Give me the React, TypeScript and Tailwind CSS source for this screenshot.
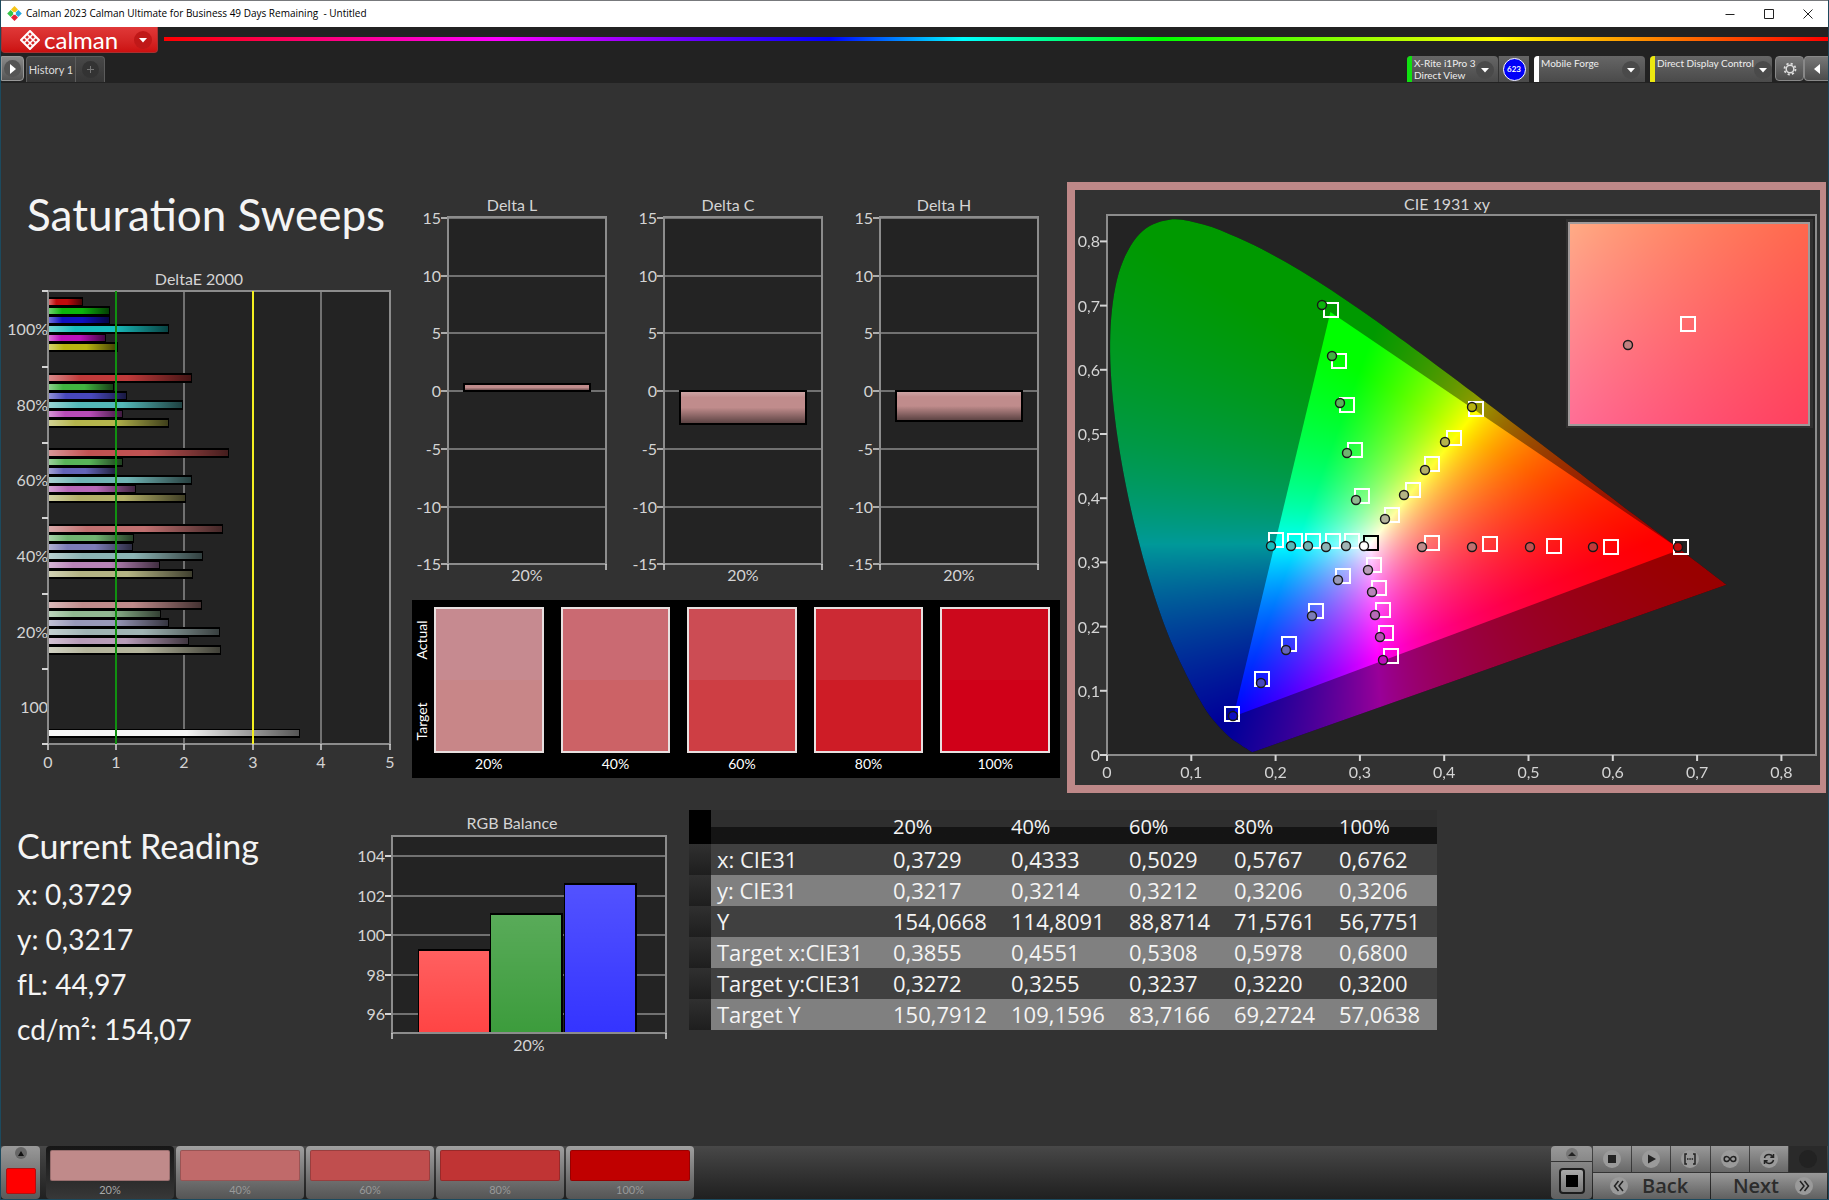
import React, { useEffect, useRef } from "react";

type Point = [number, number];

const LEVELS = ["20%", "40%", "60%", "80%", "100%"];

const DELTA_E_GROUPS = [
  {
    label: "100%",
    y: 302,
    bars: [
      ["#c00c0c", 83],
      ["#0cb40c", 110],
      ["#1010c0", 110],
      ["#18bcbc", 169],
      ["#bc10bc", 106],
      ["#b8b410", 118],
    ],
  },
  {
    label: "80%",
    y: 378,
    bars: [
      ["#c03a3a", 192],
      ["#40b440", 114],
      ["#4848bc", 127],
      ["#54b8b8", 183],
      ["#b84cb8", 123],
      ["#b4b44c", 169],
    ],
  },
  {
    label: "60%",
    y: 453,
    bars: [
      ["#c05252", 229],
      ["#58b458", 123],
      ["#6464b8", 116],
      ["#70b4b4", 192],
      ["#b868b8", 136],
      ["#b4b068", 186],
    ],
  },
  {
    label: "40%",
    y: 529,
    bars: [
      ["#c07070", 223],
      ["#70b470", 134],
      ["#7c7cb8", 133],
      ["#8cb4b4", 203],
      ["#b884b8", 160],
      ["#b4b484", 193],
    ],
  },
  {
    label: "20%",
    y: 605,
    bars: [
      ["#c08c8c", 202],
      ["#90b890", 161],
      ["#9898b8", 169],
      ["#a0b4b4", 220],
      ["#b89cb8", 189],
      ["#b4b49c", 221],
    ],
  },
] as { label: string; y: number; bars: [string, number][] }[];

const DELTA_CHARTS = [
  { title: "Delta L", x: 448, top: 384, bottom: 391 },
  { title: "Delta C", x: 664, top: 391, bottom: 424 },
  { title: "Delta H", x: 880, top: 391, bottom: 421 },
];

const SWATCHES = [
  { label: "20%", actual: "bg-[#c68a90]", target: "bg-[#c88688]" },
  { label: "40%", actual: "bg-[#ca6a72]", target: "bg-[#cc6266]" },
  { label: "60%", actual: "bg-[#cc4c54]", target: "bg-[#ce3e44]" },
  { label: "80%", actual: "bg-[#cc2a34]", target: "bg-[#ce1c26]" },
  { label: "100%", actual: "bg-[#cc081c]", target: "bg-[#d00018]" },
];

const TABLE_ROWS = [
  ["x: CIE31", "0,3729", "0,4333", "0,5029", "0,5767", "0,6762"],
  ["y: CIE31", "0,3217", "0,3214", "0,3212", "0,3206", "0,3206"],
  ["Y", "154,0668", "114,8091", "88,8714", "71,5761", "56,7751"],
  ["Target x:CIE31", "0,3855", "0,4551", "0,5308", "0,5978", "0,6800"],
  ["Target y:CIE31", "0,3272", "0,3255", "0,3237", "0,3220", "0,3200"],
  ["Target Y", "150,7912", "109,1596", "83,7166", "69,2724", "57,0638"],
];

const PATTERNS = [
  { label: "20%", color: "bg-[#c08a8a]" },
  { label: "40%", color: "bg-[#c06a6a]" },
  { label: "60%", color: "bg-[#c04e4e]" },
  { label: "80%", color: "bg-[#c03434]" },
  { label: "100%", color: "bg-[#c00000]" },
];

// spectral locus, 380nm to 700nm
const LOCUS: Point[] = [
  [0.1741, 0.005], [0.1714, 0.0051], [0.1644, 0.0109], [0.1566, 0.0177], [0.144, 0.0297],
  [0.1241, 0.0578], [0.1096, 0.0868], [0.0913, 0.1327], [0.0687, 0.2007], [0.0454, 0.295],
  [0.0235, 0.4127], [0.0082, 0.5384], [0.0039, 0.6548], [0.0139, 0.7502], [0.0389, 0.812],
  [0.0743, 0.8338], [0.1142, 0.8262], [0.1547, 0.8059], [0.1929, 0.7816], [0.2296, 0.7543],
  [0.2658, 0.7243], [0.3016, 0.6923], [0.3373, 0.6589], [0.3731, 0.6245], [0.4441, 0.5547],
  [0.5125, 0.4866], [0.5752, 0.4242], [0.627, 0.3725], [0.6658, 0.334], [0.6915, 0.3083],
  [0.719, 0.2809], [0.7347, 0.2653],
];

const GAMUT: Point[] = [[0.68, 0.32], [0.265, 0.69], [0.15, 0.06]];

const TARGETS: Point[] = [
  [1331, 310], [1339, 361], [1347, 405], [1355, 450], [1362, 496],
  [1476, 409], [1454, 438], [1432, 464], [1413, 490], [1392, 515],
  [1276, 540], [1295, 541], [1313, 541], [1333, 541], [1352, 541],
  [1432, 543], [1490, 544], [1554, 546], [1611, 547], [1681, 547],
  [1374, 565], [1379, 588], [1383, 610], [1386, 633], [1391, 656],
  [1343, 576], [1316, 611], [1289, 644], [1262, 679], [1232, 714],
];

const READINGS: [number, number, string][] = [
  [1322, 305, "#0cb40c"], [1332, 356, "#40b440"], [1340, 403, "#58b458"], [1347, 453, "#70b470"], [1356, 500, "#90b890"],
  [1472, 407, "#b8b410"], [1445, 442, "#b4b44c"], [1425, 470, "#b4b068"], [1404, 495, "#b4b484"], [1385, 519, "#b4b49c"],
  [1271, 546, "#18bcbc"], [1291, 546, "#54b8b8"], [1308, 546, "#70b4b4"], [1326, 547, "#8cb4b4"], [1346, 546, "#a0b4b4"],
  [1364, 546, "#ffffff"],
  [1422, 547, "#c08c8c"], [1472, 547, "#c07070"], [1530, 547, "#c05252"], [1593, 547, "#c03a3a"], [1678, 547, "#c00c0c"],
  [1368, 570, "#b89cb8"], [1372, 592, "#b884b8"], [1375, 615, "#b868b8"], [1380, 637, "#b84cb8"], [1383, 660, "#bc10bc"],
  [1338, 580, "#9898b8"], [1312, 616, "#7c7cb8"], [1286, 650, "#6464b8"], [1261, 683, "#4848bc"], [1233, 716, "#1010c0"],
];

function chromaticityColor(x: number, y: number): number[] {
  const X = x / y;
  const Z = (1 - x - y) / y;
  const rgb = [
    3.2406 * X - 1.5372 - 0.4986 * Z,
    -0.9689 * X + 1.8758 + 0.0415 * Z,
    0.0557 * X - 0.204 + 1.057 * Z,
  ].map((v) => Math.max(0, v));
  const max = Math.max(...rgb);
  return rgb.map((v) => Math.round((v / max) * 255));
}

function paintField(width: number, height: number, x0: number, x1: number, y0: number, y1: number) {
  const canvas = document.createElement("canvas");
  canvas.width = width;
  canvas.height = height;
  const ctx = canvas.getContext("2d")!;
  const image = ctx.createImageData(width, height);
  for (let row = 0; row < height; row++) {
    for (let col = 0; col < width; col++) {
      const x = x0 + ((col + 0.5) / width) * (x1 - x0);
      const y = Math.max(0.001, y1 - ((row + 0.5) / height) * (y1 - y0));
      const [r, g, b] = chromaticityColor(x, y);
      image.data.set([r, g, b, 255], (row * width + col) * 4);
    }
  }
  ctx.putImageData(image, 0, 0);
  return canvas;
}

function LocusCanvas() {
  const ref = useRef<HTMLCanvasElement>(null);

  useEffect(() => {
    const canvas = ref.current!;
    const ctx = canvas.getContext("2d")!;
    const w = canvas.width;
    const h = canvas.height;
    const px = (p: Point): Point => [p[0] * 843, h - p[1] * 642];
    const field = paintField(w, h, 0, w / 843, 0, h / 642);
    ctx.clearRect(0, 0, w, h);

    const pts = LOCUS.map(px);
    ctx.save();
    ctx.beginPath();
    ctx.moveTo(pts[0][0], pts[0][1]);
    for (let i = 0; i < pts.length - 1; i++) {
      const a = pts[Math.max(0, i - 1)];
      const b = pts[i];
      const c = pts[i + 1];
      const d = pts[Math.min(pts.length - 1, i + 2)];
      ctx.bezierCurveTo(
        b[0] + (c[0] - a[0]) / 6, b[1] + (c[1] - a[1]) / 6,
        c[0] - (d[0] - b[0]) / 6, c[1] - (d[1] - b[1]) / 6,
        c[0], c[1],
      );
    }
    ctx.closePath();
    ctx.clip();
    ctx.fillStyle = "#000";
    ctx.fillRect(0, 0, w, h);
    ctx.globalAlpha = 0.6;
    ctx.drawImage(field, 0, 0);
    ctx.restore();

    ctx.save();
    ctx.beginPath();
    GAMUT.map(px).forEach((p) => ctx.lineTo(p[0], p[1]));
    ctx.closePath();
    ctx.clip();
    ctx.drawImage(field, 0, 0);
    ctx.restore();
  }, []);

  return <canvas ref={ref} width={709} height={540} className="block" />;
}

function InsetCanvas() {
  const ref = useRef<HTMLCanvasElement>(null);

  useEffect(() => {
    const ctx = ref.current!.getContext("2d")!;
    ctx.drawImage(paintField(240, 202, 0.3601, 0.4109, 0.3015, 0.3529), 0, 0);
  }, []);

  return <canvas ref={ref} width={240} height={202} className="block" />;
}

function GlossDefs() {
  return (
    <svg className="absolute size-0" aria-hidden="true">
      <defs>
        <linearGradient id="glossX" x1="0" y1="0" x2="1" y2="0">
          <stop offset="0" stopColor="#fff" stopOpacity="0.4" />
          <stop offset="0.22" stopColor="#fff" stopOpacity="0" />
          <stop offset="0.55" stopColor="#000" stopOpacity="0" />
          <stop offset="1" stopColor="#000" stopOpacity="0.65" />
        </linearGradient>
        <linearGradient id="glossY" x1="0" y1="0" x2="0" y2="1">
          <stop offset="0" stopColor="#fff" stopOpacity="0.25" />
          <stop offset="0.2" stopColor="#fff" stopOpacity="0" />
          <stop offset="0.5" stopColor="#000" stopOpacity="0" />
          <stop offset="1" stopColor="#000" stopOpacity="0.55" />
        </linearGradient>
        <linearGradient id="rgbGloss" x1="0" y1="0" x2="0" y2="1">
          <stop offset="0" stopColor="#fff" stopOpacity="0.15" />
          <stop offset="1" stopColor="#fff" stopOpacity="0" />
        </linearGradient>
      </defs>
    </svg>
  );
}

function DeltaEChart() {
  const xs = [48, 116, 184, 253, 321, 390];
  return (
    <svg viewBox="1 260 411 520" className="block h-auto w-full text-[16px]" fill="#d4d4d4" role="img" aria-label="DeltaE 2000">
      <text x="199" y="285" textAnchor="middle">DeltaE 2000</text>
      <rect x="48" y="291" width="342" height="453" fill="#232323" />
      {xs.slice(1, 5).map((x) => (
        <line key={x} x1={x} x2={x} y1="291" y2="744" stroke="#8c8c8c" strokeWidth="1.5" />
      ))}
      {DELTA_E_GROUPS.map((group) => (
        <g key={group.label}>
          {group.bars.map(([color, end], i) => (
            <g key={color}>
              <rect x="48" y={group.y - 5 + i * 9} width={end - 48} height="10" fill="#000" />
              <rect x="49" y={group.y - 3 + i * 9} width={end - 50} height="6" fill={color} />
              <rect x="49" y={group.y - 3 + i * 9} width={end - 50} height="6" fill="url(#glossX)" />
            </g>
          ))}
          <text x="48" y={group.y + 33} textAnchor="end">{group.label}</text>
        </g>
      ))}
      <text x="48" y="713" textAnchor="end">100</text>
      <rect x="48" y="729" width="252" height="9" fill="#000" />
      <rect x="49" y="730" width="250" height="6" fill="#f4f4f4" />
      <rect x="49" y="730" width="250" height="6" fill="url(#glossX)" />
      <rect x="48" y="291" width="342" height="453" fill="none" stroke="#8c8c8c" strokeWidth="2" />
      <line x1="116" x2="116" y1="291" y2="744" stroke="#109010" strokeWidth="2" />
      <line x1="253" x2="253" y1="291" y2="744" stroke="#f4f020" strokeWidth="2" />
      {[291, 367, 443, 518, 594, 669, 744].map((y) => (
        <line key={y} x1="42" x2="48" y1={y} y2={y} stroke="#d4d4d4" strokeWidth="2" />
      ))}
      {xs.map((x, i) => (
        <g key={x}>
          <line x1={x} x2={x} y1="744" y2="750" stroke="#d4d4d4" strokeWidth="1.5" />
          <text x={x} y="768" textAnchor="middle">{i}</text>
        </g>
      ))}
    </svg>
  );
}

function DeltaCharts() {
  return (
    <svg viewBox="412 190 655 400" className="block h-auto w-full text-[16px]" fill="#d4d4d4" role="img" aria-label="Delta L, Delta C and Delta H">
      {DELTA_CHARTS.map(({ title, x, top, bottom }) => (
        <g key={title}>
          <text x={x + 64} y="211" textAnchor="middle">{title}</text>
          <rect x={x} y="217" width="158" height="347" fill="#232323" />
          {[218, 276, 333, 391, 449, 507, 564].map((y, i) => (
            <g key={y}>
              <line x1={x} x2={x + 158} y1={y} y2={y} stroke="#8c8c8c" strokeWidth="1.5" />
              <line x1={x - 7} x2={x} y1={y} y2={y} stroke="#d4d4d4" strokeWidth="1.5" />
              <text x={x - 7} y={y + 6} textAnchor="end">{15 - i * 5}</text>
            </g>
          ))}
          <rect x={x} y="217" width="158" height="347" fill="none" stroke="#8c8c8c" strokeWidth="2" />
          <rect x={x + 16} y={top} width="126" height={bottom - top} fill="#c08c8c" />
          <rect x={x + 16} y={top} width="126" height={bottom - top} fill="url(#glossY)" stroke="#000" strokeWidth="2" />
          <line x1={x} x2={x} y1="564" y2="570" stroke="#d4d4d4" strokeWidth="1.5" />
          <line x1={x + 158} x2={x + 158} y1="564" y2="570" stroke="#d4d4d4" strokeWidth="1.5" />
          <text x={x + 79} y="581" textAnchor="middle">20%</text>
        </g>
      ))}
    </svg>
  );
}

function SwatchPanel() {
  return (
    <div className="mt-[10px] mr-[7px] flex bg-black pr-[10px] text-[14px] text-white">
      <div className="mb-[17px] flex w-[22px] flex-col items-center pr-[4px]">
        <span className="flex flex-1 rotate-180 items-center justify-center [writing-mode:vertical-rl]">Actual</span>
        <span className="flex flex-1 rotate-180 items-center justify-center [writing-mode:vertical-rl]">Target</span>
      </div>
      <div className="grid flex-1 grid-cols-5 gap-[17px] pt-[7px]">
        {SWATCHES.map((swatch) => (
          <div key={swatch.label}>
            <div className="h-[146px] border-2 border-[#e8e0e0]">
              <div className={`h-1/2 ${swatch.actual}`} />
              <div className={`h-1/2 ${swatch.target}`} />
            </div>
            <div className="h-[25px] text-center leading-[22px]">{swatch.label}</div>
          </div>
        ))}
      </div>
    </div>
  );
}

function CieChart() {
  return (
    <div className="mr-[2px] border-8 border-r-[6px] border-[#be8888] bg-[#323232]">
      <svg viewBox="1075 190 745 595" className="block h-auto w-full text-[16px]" fill="#d4d4d4" role="img" aria-label="CIE 1931 xy">
        <text x="1447" y="210" textAnchor="middle">CIE 1931 xy</text>
        <rect x="1107" y="215" width="709" height="540" fill="#232323" />
        <foreignObject x="1107" y="215" width="709" height="540">
          <LocusCanvas />
        </foreignObject>
        <rect x="1107" y="215" width="709" height="540" fill="none" stroke="#8c8c8c" strokeWidth="2" />
        {[0, 1, 2, 3, 4, 5, 6, 7, 8].map((n) => (
          <g key={n}>
            <line x1="1100" x2="1107" y1={755 - n * 64.2} y2={755 - n * 64.2} stroke="#d4d4d4" strokeWidth="2" />
            <text x="1100" y={761 - n * 64.2} textAnchor="end">{n ? `0,${n}` : "0"}</text>
            <line x1={1107 + n * 84.3} x2={1107 + n * 84.3} y1="755" y2="761" stroke="#d4d4d4" strokeWidth="2" />
            <text x={1107 + n * 84.3} y="778" textAnchor="middle">{n ? `0,${n}` : "0"}</text>
          </g>
        ))}
        {TARGETS.map(([x, y]) => (
          <rect key={`${x}-${y}`} x={x - 7} y={y - 7} width="14" height="14" fill="none" stroke="#fff" strokeWidth="2" />
        ))}
        <rect x="1364" y="536" width="14" height="14" fill="none" stroke="#000" strokeWidth="2" />
        {READINGS.map(([x, y, color]) => (
          <circle key={`${x}-${y}`} cx={x} cy={y} r="4.5" fill={color} stroke="#181818" strokeWidth="1.4" />
        ))}
        <rect x="1566" y="219" width="247" height="209" fill="#303030" />
        <foreignObject x="1569" y="223" width="240" height="202">
          <InsetCanvas />
        </foreignObject>
        <rect x="1569" y="223" width="240" height="202" fill="none" stroke="#a09a9a" strokeWidth="2" />
        <rect x="1681" y="317" width="14" height="14" fill="none" stroke="#fff" strokeWidth="2" />
        <circle cx="1628" cy="345" r="4.5" fill="#c08080" stroke="#181818" strokeWidth="1.4" />
      </svg>
    </div>
  );
}

function RgbBalance() {
  const bars: [number, number, string][] = [
    [419, 950, "#ff4444"],
    [491, 914, "#3c9c3c"],
    [565, 884, "#3434ff"],
  ];
  const grid: [string, number][] = [["104", 856], ["102", 896], ["100", 935], ["98", 975], ["96", 1014]];
  return (
    <svg viewBox="341 808 348 252" className="block h-auto w-full text-[16px]" fill="#d4d4d4" role="img" aria-label="RGB Balance">
      <text x="512" y="829" textAnchor="middle">RGB Balance</text>
      <rect x="392" y="836" width="274" height="197" fill="#232323" />
      {grid.map(([label, y]) => (
        <g key={label}>
          <line x1="392" x2="666" y1={y} y2={y} stroke="#8c8c8c" strokeWidth="1.5" />
          <line x1="385" x2="392" y1={y} y2={y} stroke="#d4d4d4" strokeWidth="2" />
          <text x="385" y={y + 6} textAnchor="end">{label}</text>
        </g>
      ))}
      {bars.map(([x, y, color]) => (
        <g key={color}>
          <rect x={x - 1} y={y - 1} width="73" height={1034 - y} fill="#000" />
          <rect x={x} y={y + 1} width="70" height={1032 - y} fill={color} />
          <rect x={x} y={y + 1} width="70" height={1032 - y} fill="url(#rgbGloss)" />
        </g>
      ))}
      <rect x="392" y="836" width="274" height="197" fill="none" stroke="#8c8c8c" strokeWidth="2" />
      <line x1="392" x2="392" y1="1033" y2="1039" stroke="#d4d4d4" strokeWidth="1.5" />
      <line x1="666" x2="666" y1="1033" y2="1039" stroke="#d4d4d4" strokeWidth="1.5" />
      <text x="529" y="1051" textAnchor="middle">20%</text>
    </svg>
  );
}

function ReadingsTable() {
  return (
    <table className="mt-[2px] w-full table-fixed border-collapse text-left font-['Open_Sans',sans-serif] text-[22px] text-[#f4f4f4]">
      <colgroup>
        <col className="w-[22px]" />
        <col className="w-[176px]" />
        <col className="w-[118px]" />
        <col className="w-[118px]" />
        <col className="w-[105px]" />
        <col className="w-[105px]" />
        <col className="w-[104px]" />
      </colgroup>
      <thead>
        <tr className="h-[34px] bg-linear-to-b from-[#2e2e2e] from-50% to-[#141414] to-50%">
          <td className="bg-black" />
          <td />
          {LEVELS.map((level) => (
            <th key={level} scope="col" className="px-[6px] py-0 text-[20px] leading-[34px] font-normal">{level}</th>
          ))}
        </tr>
      </thead>
      <tbody>
        {TABLE_ROWS.map(([name, ...values]) => (
          <tr key={name} className="h-[31px] odd:bg-[#404040] even:bg-[#808080]">
            <td className="bg-linear-to-b from-[#303030] to-[#1e1e1e]" />
            <th scope="row" className="px-[6px] py-0 leading-[31px] font-normal whitespace-nowrap">{name}</th>
            {values.map((value, i) => (
              <td key={i} className="px-[6px] py-0 leading-[31px]">{value}</td>
            ))}
          </tr>
        ))}
      </tbody>
    </table>
  );
}

function Caret({ className = "" }: { className?: string }) {
  return (
    <span className={`flex size-[18px] shrink-0 items-center justify-center rounded-full ${className}`}>
      <svg width="10" height="6" viewBox="0 0 10 6" fill="#fff">
        <path d="M1 1h8L5 5.4z" />
      </svg>
    </span>
  );
}

function TitleBar() {
  return (
    <div className="flex h-[27px] items-center border-t border-[#77797c] bg-white pr-[15px] pb-[1px] pl-[6px] text-black">
      <svg width="15" height="15" viewBox="0 0 15 15">
        <path d="M7.500 0l3.500 3.500L7.500 7 4 3.500z" fill="#f6c416" />
        <path d="M3.700 3.900l3.500 3.500-3.500 3.500L.2 7.400z" fill="#35c54a" />
        <path d="M11.300 3.900l3.500 3.500-3.500 3.500-3.500-3.500z" fill="#28a8e0" />
        <path d="M7.500 7.900l3.500 3.500-3.500 3.500L4 11.400z" fill="#e4213a" />
        <path d="M7.500 5.700l1.700 1.700-1.700 1.700-1.700-1.700z" fill="#fff" />
      </svg>
      <span className="ml-[4px] font-['Open_Sans',sans-serif] text-[10px] whitespace-pre">
        Calman 2023 Calman Ultimate for Business 49 Days Remaining{"  "}- Untitled
      </span>
      <div className="ml-auto flex items-center gap-[29px]">
        <button type="button" aria-label="Minimize" className="flex">
          <svg width="10" height="10" stroke="#222"><path d="M0.500 5.500h9" /></svg>
        </button>
        <button type="button" aria-label="Maximize" className="flex">
          <svg width="10" height="10" fill="none" stroke="#222"><path d="M0.500 0.500h9v9h-9z" /></svg>
        </button>
        <button type="button" aria-label="Close" className="flex">
          <svg width="10" height="10" stroke="#222"><path d="M0.500 0.500l9 9M9.500 0.500l-9 9" /></svg>
        </button>
      </div>
    </div>
  );
}

function BrandBar() {
  return (
    <div className="flex h-[29px] items-start bg-[#222]">
      <button
        type="button"
        aria-label="Calman menu"
        className="flex h-[26px] w-[157px] items-center rounded-b border border-t-0 border-[#a83030] bg-linear-to-b from-[#e03838] to-[#cc1010] pl-[18px] text-white"
      >
        <svg width="20" height="20" viewBox="0 0 20 20" fill="none" stroke="#fff" strokeWidth="1.6">
          <path d="M10 1l9 9-9 9-9-9z" strokeWidth="2" strokeLinejoin="round" />
          <path d="M7 4l9 9M4 7l9 9M13 4l-9 9M16 7l-9 9" strokeWidth="1.600" />
        </svg>
        <span className="ml-[4px] text-[24px] leading-[20px]">calman</span>
        <Caret className="mr-[5px] ml-auto bg-[#c01818]" />
      </button>
      <div className="mt-[10px] ml-[6px] h-[4px] flex-1 bg-[linear-gradient(90deg,#f00_0%,#f0f_20%,#00f_40%,#0ff_48%,#0f0_60%,#ff0_80%,#f00_100%)]" />
    </div>
  );
}

function Device({ bar, width, lines }: { bar: string; width: string; lines: string[] }) {
  return (
    <button
      type="button"
      className={`flex h-[26px] items-start overflow-hidden rounded-t bg-linear-to-b from-[#666] to-[#4a4a4a] text-left text-[10px] leading-[12px] text-[#eee] ${width}`}
    >
      <span className={`h-full w-[5px] shrink-0 ${bar}`} />
      <span className="ml-[2px] pt-[1px] whitespace-nowrap">
        {lines.map((line) => (
          <span key={line} className="block">{line}</span>
        ))}
      </span>
      <Caret className="mt-[5px] ml-auto bg-[#4a4a4a]" />
    </button>
  );
}

function TabBar() {
  return (
    <div className="flex h-[27px] items-start bg-[#222] text-[#ddd]">
      <button
        type="button"
        aria-label="Expand panel"
        className="flex h-[25px] w-[23px] items-center justify-center rounded-r border border-[#999] bg-linear-to-b from-[#8a8a8a] to-[#555]"
      >
        <span className="flex size-[17px] items-center justify-center rounded-full bg-[#555]">
          <svg width="6" height="10" fill="#fff"><path d="M0 0l6 5-6 5z" /></svg>
        </span>
      </button>
      <div className="ml-[2px] flex h-[26px] rounded-t border border-b-0 border-[#5c5c5c] bg-linear-to-b from-[#484848] to-[#363636]">
        <button type="button" className="w-[49px] border-r border-[#5c5c5c] pt-[2px] text-[11px] whitespace-nowrap">History 1</button>
        <button type="button" aria-label="Add tab" className="flex w-[28px] items-center justify-center">
          <span className="flex size-[17px] items-center justify-center rounded-full bg-[#333]">
            <svg width="7" height="7" stroke="#777"><path d="M3.500 0v7M0 3.500h7" /></svg>
          </span>
        </button>
      </div>
      <div className="ml-auto flex items-start">
        <Device bar="bg-[#10e010]" width="w-[91px] pr-[8px]" lines={["X-Rite i1Pro 3", "Direct View"]} />
        <div className="mr-[5px] flex h-[26px] w-[31px] items-center justify-center border-l border-[#333] bg-linear-to-b from-[#666] to-[#4a4a4a]">
          <span className="flex size-[23px] items-center justify-center rounded-full border border-white bg-[#0000f8] text-[8px] font-bold text-white">623</span>
        </div>
        <Device bar="bg-white" width="w-[111px] pr-[5px]" lines={["Mobile Forge"]} />
        <span className="w-[5px]" />
        <Device bar="bg-[#ece810]" width="w-[122px] pr-[4px]" lines={["Direct Display Control"]} />
        <button
          type="button"
          aria-label="Settings"
          className="ml-[3px] flex h-[25px] w-[29px] items-center justify-center rounded border border-[#888] bg-linear-to-b from-[#777] to-[#4c4c4c]"
        >
          <svg width="14" height="14" viewBox="0 0 14 14" fill="none" stroke="#ddd">
            <circle cx="7" cy="7" r="3.800" strokeWidth="1.500" />
            <circle cx="7" cy="7" r="5.500" strokeWidth="1.800" strokeDasharray="2.160 2.160" />
          </svg>
        </button>
        <button
          type="button"
          aria-label="Collapse panel"
          className="flex h-[25px] w-[24px] items-center justify-center rounded-l border border-r-0 border-[#888] bg-linear-to-b from-[#777] to-[#4c4c4c]"
        >
          <svg width="6" height="10" fill="#fff"><path d="M6 0L0 5l6 5z" /></svg>
        </button>
      </div>
    </div>
  );
}

function Round({ children }: { children?: React.ReactNode }) {
  return (
    <span className="flex size-[18px] items-center justify-center rounded-full bg-[#9a9a9a] text-[#222]">
      {children}
    </span>
  );
}

const TRANSPORT = [
  { name: "Stop", icon: <path d="M3 3h8v8H3z" fill="currentColor" stroke="none" /> },
  { name: "Play", icon: <path d="M4 2.500l8 4.500-8 4.500z" fill="currentColor" stroke="none" /> },
  { name: "Read series", icon: <path d="M4 2H2v10h2M10 2h2v10h-2M4 7h1.500M6.300 7h1.500M8.600 7h1.500" /> },
  { name: "Read continuous", icon: <path d="M7 7C5.500 4.800 4.800 4.500 3.700 4.500a2.500 2.500 0 000 5C4.800 9.500 5.500 9.200 7 7s2.200-2.500 3.300-2.500a2.500 2.500 0 010 5C9.200 9.500 8.500 9.200 7 7z" /> },
  { name: "Refresh", icon: <path d="M2.500 6C3 3.800 4.800 2.600 7 2.600c1.600 0 2.900.8 3.700 2M11.500 2v3.200H8.300M11.500 8c-.5 2.200-2.300 3.400-4.500 3.400-1.600 0-2.900-.8-3.700-2M2.500 12V8.800h3.200" /> },
];

function BottomBar() {
  return (
    <footer className="flex h-[54px] items-stretch border-b border-[#1c4a5e] bg-linear-to-b from-[#484848] to-[#202020]">
      <button
        type="button"
        aria-label="Current pattern"
        className="flex w-[39px] flex-col items-center rounded bg-linear-to-b from-[#999] to-[#5a5a5a] pt-[1px]"
      >
        <span className="flex size-[12px] items-center justify-center rounded-full bg-[#666]">
          <svg width="6" height="5" fill="#111"><path d="M3 0l3 5H0z" /></svg>
        </span>
        <span className="mt-[9px] h-[26px] w-[30px] rounded-xs border border-[#b01010] bg-[#ff0000]" />
      </button>
      <div className="ml-[6px] flex gap-[2px]">
        {PATTERNS.map((pattern, i) => (
          <button
            key={pattern.label}
            type="button"
            className={`flex w-[128px] flex-col rounded px-[4px] pt-[4px] text-[11px] leading-[18px] ${
              i === 0
                ? "bg-linear-to-b from-[#161616] to-[#383838] text-[#a8a8a8]"
                : "bg-linear-to-b from-[#a0a0a0] to-[#555] text-[#999]"
            }`}
          >
            <span className={`h-[31px] w-full rounded-xs border border-black/20 ${pattern.color}`} />
            <span className="w-full text-center">{pattern.label}</span>
          </button>
        ))}
      </div>
      <div className="mr-[1px] ml-auto flex">
        <div className="flex w-[41px] flex-col rounded bg-linear-to-b from-[#999] to-[#606060]">
          <button type="button" aria-label="Show pattern options" className="flex h-[16px] items-center justify-center border-b border-[#333]">
            <span className="flex size-[12px] items-center justify-center rounded-full bg-[#777]">
              <svg width="8" height="4" fill="#222"><path d="M4 0l4 4H0z" /></svg>
            </span>
          </button>
          <button type="button" aria-label="Pattern window" className="flex flex-1 items-center justify-center">
            <span className="flex size-[26px] items-center justify-center rounded border-2 border-[#1c1c1c] bg-linear-to-b from-[#aaa] to-[#777]">
              <span className="size-[12px] bg-black" />
            </span>
          </button>
        </div>
        <div className="ml-[1px] flex w-[234px] flex-col gap-px">
          <div className="grid h-[26px] grid-cols-6 gap-px">
            {TRANSPORT.map((item) => (
              <button
                key={item.name}
                type="button"
                aria-label={item.name}
                className="flex items-center justify-center bg-linear-to-b from-[#999] to-[#686868]"
              >
                <Round>
                  <svg width="14" height="14" viewBox="0 0 14 14" fill="none" stroke="currentColor" strokeWidth="1.500">
                    {item.icon}
                  </svg>
                </Round>
              </button>
            ))}
            <span className="flex items-center justify-center bg-[#2a2a2a]">
              <span className="size-[18px] rounded-full bg-[#222]" />
            </span>
          </div>
          <div className="grid flex-1 grid-cols-2 gap-px font-['Open_Sans',sans-serif] text-[20px] leading-[24px] font-semibold text-[#2c2c2c]">
            <button type="button" className="flex items-center gap-[14px] bg-linear-to-b from-[#999] to-[#606060] pl-[17px]">
              <Round>
                <svg width="12" height="12" fill="none" stroke="currentColor" strokeWidth="1.500"><path d="M5.500 1L1.500 6l4 5M10 1L6 6l4 5" /></svg>
              </Round>
              Back
            </button>
            <button type="button" className="flex items-center justify-end gap-[16px] bg-linear-to-b from-[#999] to-[#606060] pr-[14px]">
              Next
              <Round>
                <svg width="12" height="12" fill="none" stroke="currentColor" strokeWidth="1.500"><path d="M2 1l4 5-4 5M6.500 1l4 5-4 5" /></svg>
              </Round>
            </button>
          </div>
        </div>
      </div>
    </footer>
  );
}

export default function App() {
  return (
    <div className="flex min-h-screen flex-col border-x border-[#1c4a5e] bg-[#323232] font-['Lato','Liberation_Sans',sans-serif] text-white">
      <GlossDefs />
      <header>
        <TitleBar />
        <BrandBar />
        <TabBar />
      </header>

      <main className="flex-1 pt-[99px]">
        <section className="grid grid-cols-[411fr_655fr_761fr] items-start">
          <div>
            <h1 className="h-[78px] pl-[26px] text-[44px] leading-[64px] whitespace-nowrap text-[#f4f4f4]">Saturation Sweeps</h1>
            <DeltaEChart />
          </div>
          <div className="pt-[8px]">
            <DeltaCharts />
            <SwatchPanel />
          </div>
          <CieChart />
        </section>

        <section className="mt-[15px] grid grid-cols-[340fr_348fr_748fr_391fr] items-start">
          <div className="pl-[16px] text-[#f4f4f4]">
            <h2 className="pt-[12px] text-[34px] leading-[52px]">Current Reading</h2>
            <div className="text-[28px] leading-[45px]">
              <p>x: 0,3729</p>
              <p>y: 0,3217</p>
              <p>fL: 44,97</p>
              <p>cd/m²: 154,07</p>
            </div>
          </div>
          <RgbBalance />
          <ReadingsTable />
        </section>
      </main>

      <BottomBar />
    </div>
  );
}
